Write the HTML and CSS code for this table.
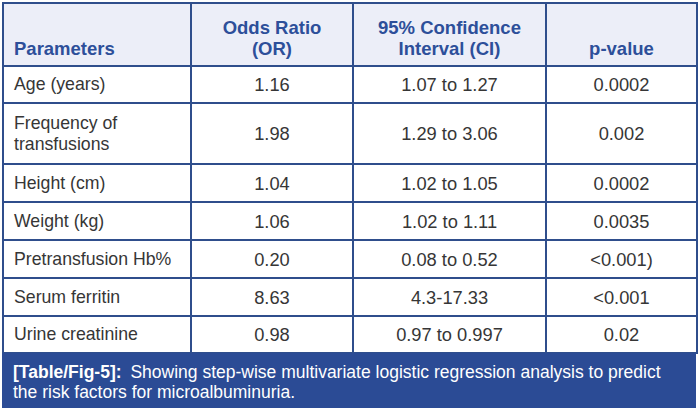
FILE: index.html
```html
<!DOCTYPE html>
<html>
<head>
<meta charset="utf-8">
<link rel="stylesheet" href="styles.css">
</head>
<body>
<div class="figure">
  <table class="data">
    <colgroup>
      <col class="c1"><col class="c2"><col class="c3"><col class="c4">
    </colgroup>
    <thead>
      <tr class="head">
        <th class="left">Parameters</th>
        <th>Odds Ratio<br>(OR)</th>
        <th>95% Confidence<br>Interval (CI)</th>
        <th>p-value</th>
      </tr>
    </thead>
    <tbody>
      <tr class="r37"><td class="left">Age (years)</td><td>1.16</td><td>1.07 to 1.27</td><td>0.0002</td></tr>
      <tr class="r61"><td class="left">Frequency of<br>transfusions</td><td>1.98</td><td>1.29 to 3.06</td><td>0.002</td></tr>
      <tr class="r38"><td class="left">Height (cm)</td><td>1.04</td><td>1.02 to 1.05</td><td>0.0002</td></tr>
      <tr class="r38"><td class="left">Weight (kg)</td><td>1.06</td><td>1.02 to 1.11</td><td>0.0035</td></tr>
      <tr class="r38"><td class="left">Pretransfusion Hb%</td><td>0.20</td><td>0.08 to 0.52</td><td>&lt;0.001)</td></tr>
      <tr class="r38"><td class="left">Serum ferritin</td><td>8.63</td><td>4.3-17.33</td><td>&lt;0.001</td></tr>
      <tr class="r37"><td class="left">Urine creatinine</td><td>0.98</td><td>0.97 to 0.997</td><td>0.02</td></tr>
    </tbody>
  </table>
  <div class="caption"><b class="label">[Table/Fig-5]:</b> Showing step-wise multivariate logistic regression analysis to predict the risk factors for microalbuminuria.</div>
</div>
</body>
</html>
```
FILE: styles.css
```css
html, body {
  margin: 0;
  padding: 0;
  background: #ffffff;
}
.figure {
  margin: 2px 0 0 2px;
  width: 694px;
  font-family: "Liberation Sans", Arial, sans-serif;
}
.data {
  width: 694px;
  border-collapse: collapse;
  table-layout: fixed;
}
.c1 { width: 188px; }
.c2 { width: 162px; }
.c3 { width: 193px; }
.c4 { width: 151px; }
.data th, .data td {
  border: 2px solid #2f4e8c;
  text-align: center;
  padding: 0 4px;
}
.data th {
  background: #eceef8;
  color: #2d4f9a;
  font-size: 18.5px;
  font-weight: bold;
  line-height: 21px;
  vertical-align: bottom;
  padding-bottom: 6px;
}
.data td {
  color: #363636;
  font-size: 18.3px;
  line-height: 21px;
  vertical-align: middle;
}
.data .left {
  text-align: left;
  padding-left: 10px;
}
.data td.left {
  font-size: 17.7px;
}
.head { height: 63px; }
.r37 { height: 37px; }
.r38 { height: 38px; }
.r61 { height: 61px; }
.caption {
  background: #2b4b95;
  color: #ffffff;
  font-size: 17.5px;
  line-height: 20px;
  padding: 9px 10px 6px 11px;
  margin-top: -1px;
}
.caption .label {
  font-weight: bold;
  margin-right: 4px;
}
```
